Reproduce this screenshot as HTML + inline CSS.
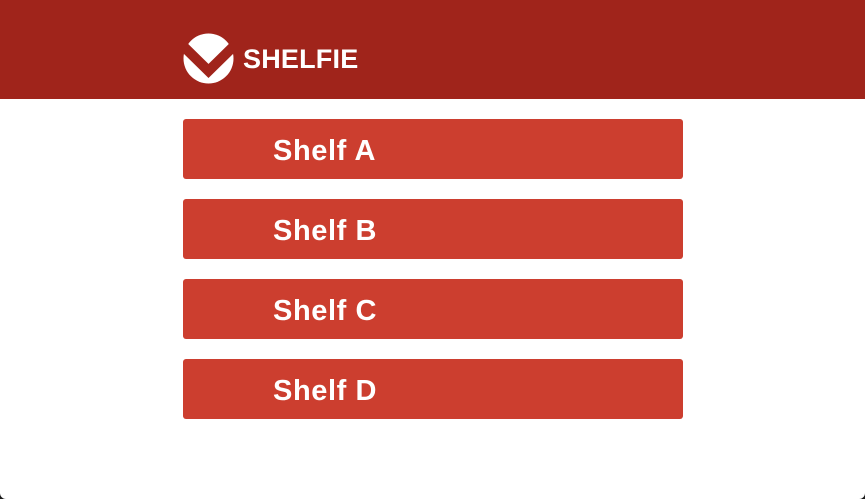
<!DOCTYPE html>
<html><head><meta charset="utf-8"><style>
html,body{margin:0;padding:0;background:#1a1a1a;}
.page{width:865px;height:499px;background:#fff;position:relative;overflow:hidden;border-radius:0 0 6px 6px;font-family:"Liberation Sans",sans-serif;}
.hdr{position:absolute;left:0;top:0;width:865px;height:99px;background:#a0241b;}
.logo{position:absolute;left:183px;top:33px;}
.brand{position:absolute;left:243px;top:42px;color:#fff;font-weight:bold;font-size:27px;letter-spacing:0.2px;line-height:34px;}
.btn{position:absolute;left:183px;width:500px;height:60px;background:#cc3e2f;border-radius:3px;}
.btn span{position:absolute;left:90px;top:16px;color:#fff;font-weight:bold;font-size:29px;line-height:33px;letter-spacing:0.6px;}
</style></head><body><div class="page">
<div class="hdr">
<svg class="logo" width="51" height="51" viewBox="0 0 51 51">
<circle cx="25.5" cy="25.5" r="25" fill="#fff"/>
<polyline points="-3,10 25.5,38 54,10" fill="none" stroke="#a0241b" stroke-width="10" stroke-linejoin="miter"/>
</svg>
<div class="brand">SHELFIE</div>
</div>
<div class="btn" style="top:119px"><span>Shelf A</span></div>
<div class="btn" style="top:199px"><span>Shelf B</span></div>
<div class="btn" style="top:279px"><span>Shelf C</span></div>
<div class="btn" style="top:359px"><span>Shelf D</span></div>
</div></body></html>
